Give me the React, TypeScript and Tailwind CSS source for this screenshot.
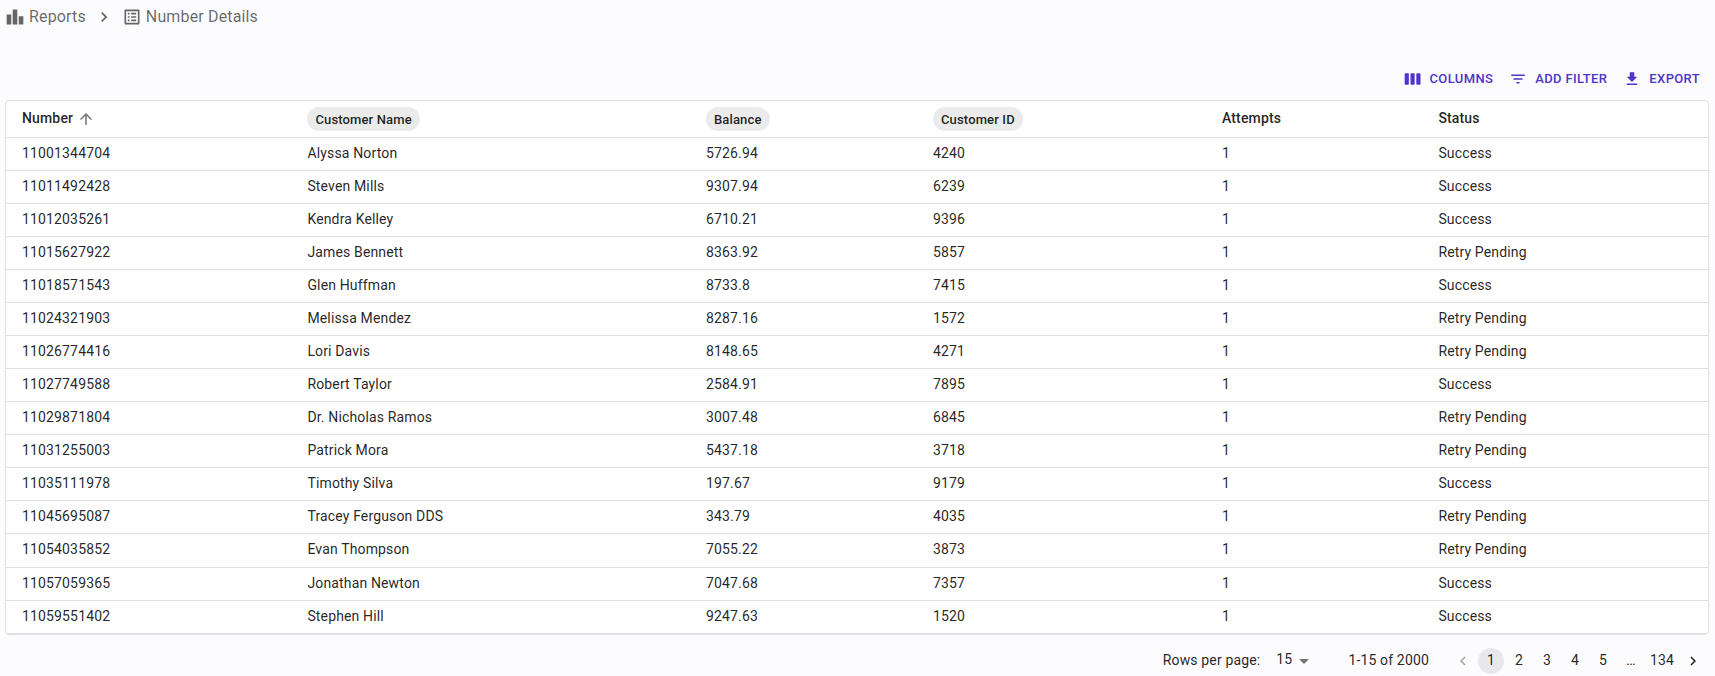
import React from "react";

const rows = [
  ["11001344704", "Alyssa Norton", "5726.94", "4240", "1", "Success"],
  ["11011492428", "Steven Mills", "9307.94", "6239", "1", "Success"],
  ["11012035261", "Kendra Kelley", "6710.21", "9396", "1", "Success"],
  ["11015627922", "James Bennett", "8363.92", "5857", "1", "Retry Pending"],
  ["11018571543", "Glen Huffman", "8733.8", "7415", "1", "Success"],
  ["11024321903", "Melissa Mendez", "8287.16", "1572", "1", "Retry Pending"],
  ["11026774416", "Lori Davis", "8148.65", "4271", "1", "Retry Pending"],
  ["11027749588", "Robert Taylor", "2584.91", "7895", "1", "Success"],
  ["11029871804", "Dr. Nicholas Ramos", "3007.48", "6845", "1", "Retry Pending"],
  ["11031255003", "Patrick Mora", "5437.18", "3718", "1", "Retry Pending"],
  ["11035111978", "Timothy Silva", "197.67", "9179", "1", "Success"],
  ["11045695087", "Tracey Ferguson DDS", "343.79", "4035", "1", "Retry Pending"],
  ["11054035852", "Evan Thompson", "7055.22", "3873", "1", "Retry Pending"],
  ["11057059365", "Jonathan Newton", "7047.68", "7357", "1", "Success"],
  ["11059551402", "Stephen Hill", "9247.63", "1520", "1", "Success"],
];

const paths = {
  leaderboard: "M7.5 21H2V9h5.5v12zm7.25-18h-5.5v18h5.5V3zM22 11h-5.5v10H22V11z",
  next: "M10 6L8.59 7.41 13.17 12l-4.58 4.59L10 18l6-6z",
  prev: "M15.41 7.41L14 6l-6 6 6 6 1.41-1.41L10.83 12z",
  list: "M19 5v14H5V5h14m1.1-2H3.9c-.5 0-.9.4-.9.9v16.2c0 .4.4.9.9.9h16.2c.4 0 .9-.5.9-.9V3.9c0-.5-.5-.9-.9-.9zM11 7h6v2h-6V7zm0 4h6v2h-6v-2zm0 4h6v2h-6zM7 7h2v2H7zm0 4h2v2H7zm0 4h2v2H7z",
  columns:
    "M6 5H3c-.55 0-1 .45-1 1v12c0 .55.45 1 1 1h3c.55 0 1-.45 1-1V6c0-.55-.45-1-1-1zm14 0h-3c-.55 0-1 .45-1 1v12c0 .55.45 1 1 1h3c.55 0 1-.45 1-1V6c0-.55-.45-1-1-1zm-7 0h-3c-.55 0-1 .45-1 1v12c0 .55.45 1 1 1h3c.55 0 1-.45 1-1V6c0-.55-.45-1-1-1z",
  filter: "M10 18h4v-2h-4v2zM3 6v2h18V6H3zm3 7h12v-2H6v2z",
  download: "M19 9h-4V3H9v6H5l7 7 7-7zM5 18v2h14v-2H5z",
  up: "M4 12l1.41 1.41L11 7.83V20h2V7.83l5.58 5.59L20 12l-8-8-8 8z",
  drop: "M7 10l5 5 5-5z",
};

function Icon({ name, className }: { name: keyof typeof paths; className: string }) {
  return (
    <svg viewBox="0 0 24 24" fill="currentColor" aria-hidden="true" className={`shrink-0 ${className}`}>
      <path d={paths[name]} />
    </svg>
  );
}

const grid = "grid grid-cols-[285.4px_398.6px_227px_289px_216.4px_1fr]";

function Chip({ children }: { children: React.ReactNode }) {
  return (
    <span className="flex h-6 items-center rounded-full bg-[#ebebeb] px-2 pt-[2px] text-[13px] tracking-[0.14px]">
      {children}
    </span>
  );
}

function HeaderCell({ label, chip, sorted }: { label: string; chip?: boolean; sorted?: boolean }) {
  return (
    <div role="columnheader" className="flex h-9 items-center px-4">
      {chip ? <Chip>{label}</Chip> : <span className="pb-[2px]">{label}</span>}
      {sorted && <Icon name="up" className="ml-1 size-[18px] text-[#757575]" />}
    </div>
  );
}

function Page({ label, active }: { label: string; active?: boolean }) {
  return (
    <button
      className={`mx-px flex h-[26px] min-w-[26px] items-center justify-center rounded-full px-1 pb-[2px] ${active ? "bg-[#e8e8eb]" : ""}`}
    >
      {label}
    </button>
  );
}

export default function App() {
  return (
    <div className="flex h-[676px] flex-col overflow-hidden bg-[#fcfcff] pr-[6px] pl-[5px] font-['Roboto',sans-serif] text-sm tracking-[0.15px] text-black/87">
      <nav className="flex h-[33px] items-center text-base tracking-[0.15px] text-black/60">
        <Icon name="leaderboard" className="mr-1 size-5" />
        <span>Reports</span>
        <Icon name="next" className="mx-2 size-5" />
        <Icon name="list" className="mr-1 size-5" />
        <span>Number Details</span>
      </nav>

      <div className="mt-[31px] flex h-[30px] items-center justify-end pr-[9px] text-[13px] font-medium tracking-[0.36px] text-[#4f34c7]">
        <button className="flex items-center">
          <Icon name="columns" className="mr-[7px] size-5" />
          COLUMNS
        </button>
        <button className="ml-4 flex items-center">
          <Icon name="filter" className="mr-2 size-[18px]" />
          ADD FILTER
        </button>
        <button className="ml-4 flex items-center">
          <Icon name="download" className="mr-2 size-[18px]" />
          EXPORT
        </button>
      </div>

      <div role="table" className="mt-[6.3px] overflow-hidden rounded border border-[#e0e0e0] bg-white">
        <div role="row" className={`${grid} border-b border-[#e0e0e0] font-medium`}>
          <HeaderCell label="Number" sorted />
          <HeaderCell label="Customer Name" chip />
          <HeaderCell label="Balance" chip />
          <HeaderCell label="Customer ID" chip />
          <HeaderCell label="Attempts" />
          <HeaderCell label="Status" />
        </div>
        {rows.map((row) => (
          <div role="row" key={row[0]} className={`${grid} border-b border-[#e0e0e0] pt-[5px] pb-[7px] leading-[20.02px]`}>
            {row.map((cell, i) => (
              <div role="cell" key={i} className="px-4">
                {cell}
              </div>
            ))}
          </div>
        ))}
      </div>

      <div className="mt-[13.2px] flex h-[26px] items-center justify-end pr-[7px]">
        <span className="pb-[2px]">Rows per page:</span>
        <span className="ml-4 pb-[3px]">15</span>
        <Icon name="drop" className="size-6 text-[#757575]" />
        <span className="mr-[25px] ml-[32px] pb-[2px]">1-15 of 2000</span>
        <Icon name="prev" className="mr-[5px] size-[18px] text-black/35" />
        <Page label="1" active />
        <Page label="2" />
        <Page label="3" />
        <Page label="4" />
        <Page label="5" />
        <Page label="…" />
        <Page label="134" />
        <Icon name="next" className="ml-[5px] size-[18px]" />
      </div>
    </div>
  );
}
